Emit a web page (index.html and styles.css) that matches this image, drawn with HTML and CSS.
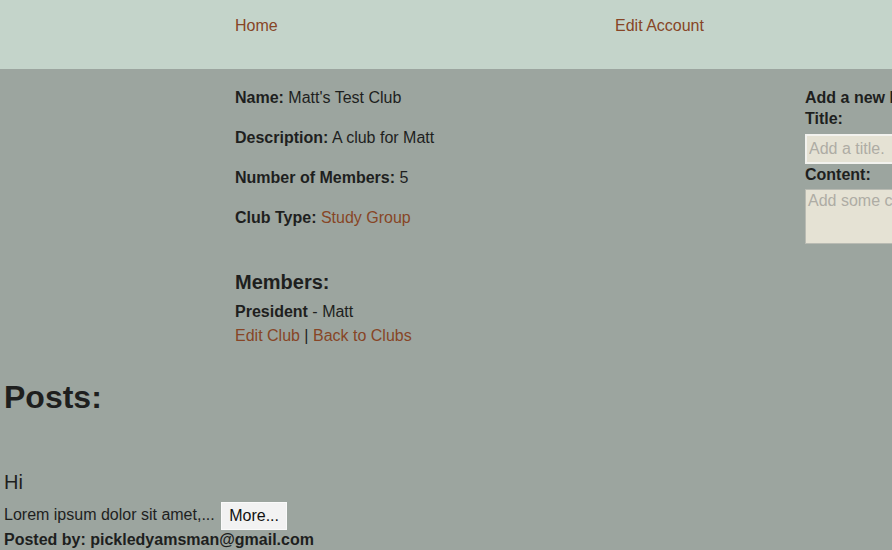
FILE: index.html
```html
<!DOCTYPE html>
<html>
<head>
<meta charset="utf-8">
<link rel="stylesheet" href="styles.css">
</head>
<body>
<nav class="nav">
  <a class="link nav-home" href="#">Home</a>
  <a class="link" href="#">Edit Account</a>
</nav>
<div class="main">
  <section class="club">
    <p class="row"><b>Name:</b> Matt's Test Club</p>
    <p class="row"><b>Description:</b> A club for Matt</p>
    <p class="row"><b>Number of Members:</b> 5</p>
    <p class="row"><b>Club Type:</b> <a class="link" href="#">Study Group</a></p>
    <h3 class="members-title">Members:</h3>
    <div class="line"><b>President</b> - Matt</div>
    <div class="line"><a class="link" href="#">Edit Club</a> | <a class="link" href="#">Back to Clubs</a></div>
  </section>
  <form class="new-post">
    <div class="form-title">Add a new Post:</div>
    <label class="label">Title:</label>
    <input class="title-input" type="text" placeholder="Add a title.">
    <label class="label">Content:</label>
    <textarea class="content-input" placeholder="Add some content."></textarea>
  </form>
</div>
<section class="posts">
  <h1 class="posts-title">Posts:</h1>
  <h3 class="post-title">Hi</h3>
  <div class="post-body">Lorem ipsum dolor sit amet,... <button class="more" type="button">More...</button></div>
  <div class="post-by">Posted by: pickledyamsman@gmail.com</div>
</section>
</body>
</html>
```
FILE: styles.css
```css
html, body {
  margin: 0;
  padding: 0;
  background: #9ca59f;
  color: #1e1f1e;
  font-family: "Liberation Sans", Arial, sans-serif;
  font-size: 16px;
  overflow: hidden;
}
.link {
  color: #874526;
  text-decoration: none;
}
.nav {
  background: #c4d4ca;
  height: 69px;
  display: flex;
  padding-left: 235px;
  box-sizing: border-box;
  padding-top: 15px;
  line-height: 22px;
}
.nav-home {
  width: 380px;
}
.main {
  display: flex;
  padding-left: 235px;
  padding-top: 1px;
}
.club {
  width: 570px;
  flex-shrink: 0;
}
.row {
  margin: 16px 0;
  line-height: 24px;
}
.members-title {
  font-size: 20px;
  line-height: 24px;
  margin: 40px 0 6px;
}
.line {
  line-height: 24px;
}
.new-post {
  display: flex;
  flex-direction: column;
  align-items: flex-start;
  padding-top: 17px;
  width: 300px;
  flex-shrink: 0;
}
.form-title {
  font-weight: bold;
  white-space: nowrap;
  line-height: 21px;
}
.label {
  font-weight: bold;
  line-height: 21px;
}
.title-input {
  margin: 5px 0 0;
  width: 200px;
  height: 30px;
  box-sizing: border-box;
  border: 2px solid #f2f2ee;
  background: #e5e2d4;
  font: 16px "Liberation Sans", Arial, sans-serif;
  padding: 1px 2px;
  outline: none;
}
.content-input {
  margin: 4px 0 0;
  width: 200px;
  height: 55px;
  box-sizing: border-box;
  border: 1px solid #b9bbb3;
  background: #e5e2d4;
  font: 16px "Liberation Sans", Arial, sans-serif;
  padding: 2px 2px;
  resize: none;
}
.title-input::placeholder,
.content-input::placeholder {
  color: #aeaca4;
}
.posts {
  padding-left: 4px;
}
.posts-title {
  font-size: 32px;
  line-height: 37px;
  margin: 31px 0 0;
}
.post-title {
  font-size: 20px;
  font-weight: normal;
  line-height: 24px;
  margin: 54px 0 8px;
}
.post-body {
  line-height: 24px;
}
.more {
  font: 16px "Liberation Sans", Arial, sans-serif;
  color: #111;
  background: #f2f2f2;
  border: 1px solid #fafafa;
  height: 28px;
  padding: 0 7px;
  margin-left: 2px;
  vertical-align: middle;
}
.post-by {
  font-weight: bold;
  line-height: 24px;
  margin-top: -2px;
}
```
